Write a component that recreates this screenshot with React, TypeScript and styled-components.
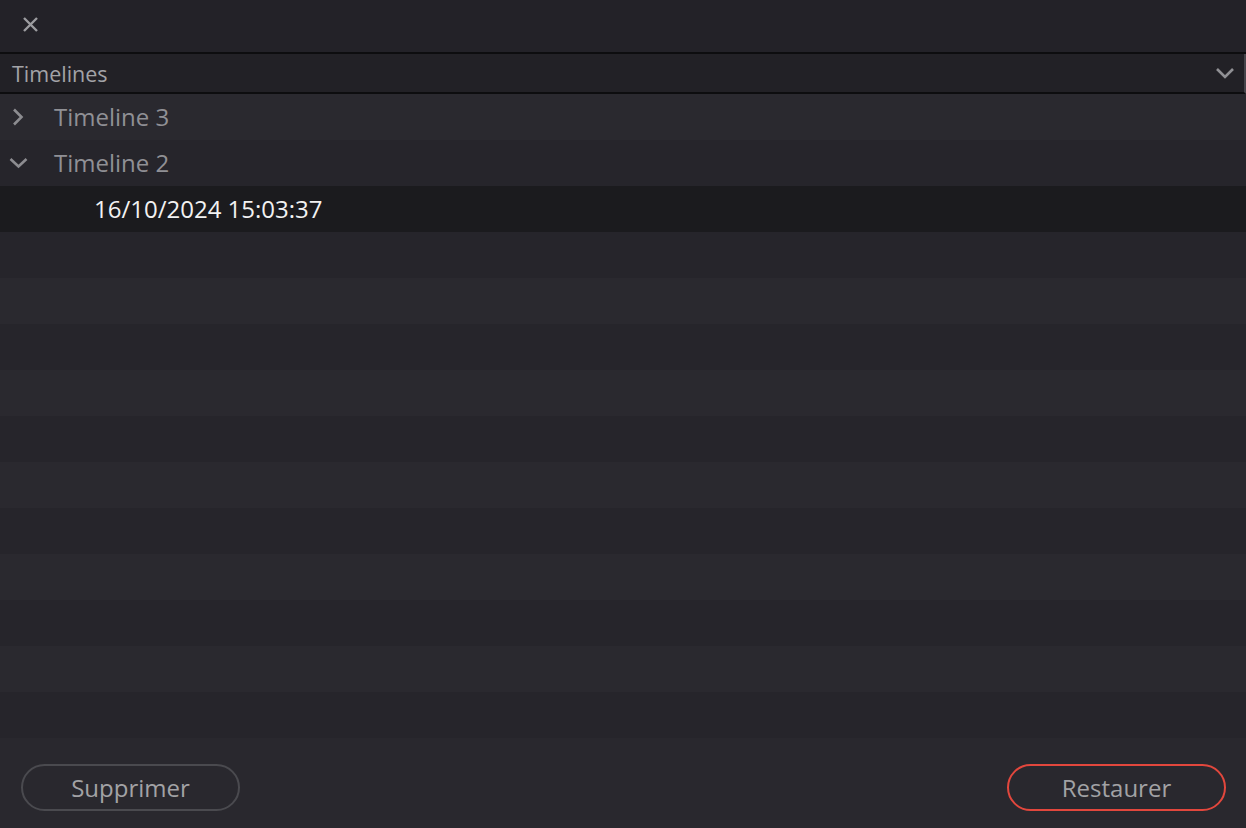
import styled, { createGlobalStyle } from "styled-components";

const GlobalStyle = createGlobalStyle`
  html, body {
    margin: 0;
    padding: 0;
    background: #29282e;
  }
  body {
    font-family: "Open Sans", "Noto Sans", sans-serif;
  }
`;

const Panel = styled.div`
  width: 1246px;
  height: 828px;
  display: flex;
  flex-direction: column;
  background: #29282e;
  overflow: hidden;
`;

const TopBar = styled.div`
  height: 54px;
  display: flex;
  align-items: center;
  padding-left: 21px;
  background: #232228;
  border-bottom: 2px solid #0d0d0f;
  box-sizing: border-box;
  flex-shrink: 0;
`;

const CloseButton = styled.button`
  width: 18px;
  height: 18px;
  padding: 0;
  border: none;
  background: transparent;
  display: flex;
  align-items: center;
  justify-content: center;
  cursor: pointer;
  margin-top: -4px;
`;

const Header = styled.div`
  height: 40px;
  display: flex;
  align-items: center;
  justify-content: space-between;
  padding: 0 9px 0 12px;
  background: #222126;
  border-bottom: 2px solid #0d0d0f;
  border-right: 2px solid #46454b;
  box-sizing: border-box;
  flex-shrink: 0;
  color: #a3a3a7;
  font-size: 21.5px;
`;

const List = styled.div`
  display: flex;
  flex-direction: column;
  flex-shrink: 0;
`;

const Row = styled.div<{ $odd: boolean; $selected?: boolean }>`
  height: 46px;
  display: flex;
  align-items: center;
  background: ${(p) => (p.$selected ? "#1b1b1e" : p.$odd ? "#26252b" : "#2a292f")};
  font-size: 24px;
  line-height: 1;
`;

const Toggle = styled.span`
  width: 54px;
  display: flex;
  align-items: center;
  padding-left: 8px;
  box-sizing: border-box;
`;

const RowLabel = styled.span<{ $indent?: number; $bright?: boolean }>`
  padding-left: ${(p) => p.$indent ?? 0}px;
  color: ${(p) => (p.$bright ? "#f2f2f2" : "#909095")};
  margin-top: -1px;
`;

const Footer = styled.div`
  flex: 1;
  display: flex;
  align-items: center;
  justify-content: space-between;
  padding: 8px 20px 0 21px;
  background: #29282e;
`;

const PillButton = styled.button<{ $accent?: boolean }>`
  width: 219px;
  height: 47px;
  border-radius: 24px;
  border: 2px solid ${(p) => (p.$accent ? "#e2473d" : "#4a4a4f")};
  background: transparent;
  color: #a2a2a5;
  font-family: "Open Sans", "Noto Sans", sans-serif;
  font-size: 24px;
  cursor: pointer;
`;

const Chevron = ({ dir }: { dir: "right" | "down" }) =>
  dir === "right" ? (
    <svg width="20" height="20" viewBox="0 0 20 20">
      <path d="M6 2.5 L13.5 10 L6 17.5" fill="none" stroke="#8c8c90" strokeWidth="2.6" />
    </svg>
  ) : (
    <svg width="20" height="20" viewBox="0 0 20 20">
      <path d="M2.5 6 L10.5 13.5 L18.5 6" fill="none" stroke="#8c8c90" strokeWidth="2.6" />
    </svg>
  );

const rows = [
  { label: "Timeline 3", toggle: "right" as const },
  { label: "Timeline 2", toggle: "down" as const },
  { label: "16/10/2024 15:03:37", child: true },
];

export default function App() {
  const total = 14;
  return (
    <>
      <GlobalStyle />
      <Panel>
        <TopBar>
          <CloseButton aria-label="Fermer">
            <svg width="17" height="17" viewBox="0 0 17 17">
              <path d="M2 2 L15 15 M15 2 L2 15" stroke="#9c9ca0" strokeWidth="2.4" />
            </svg>
          </CloseButton>
        </TopBar>
        <Header>
          <span>Timelines</span>
          <svg width="20" height="12" viewBox="0 0 20 12">
            <path d="M2 2 L10 10 L18 2" fill="none" stroke="#909094" strokeWidth="2.6" />
          </svg>
        </Header>
        <List>
          {Array.from({ length: total }).map((_, i) => {
            const item = rows[i];
            return (
              <Row key={i} $odd={i % 2 === 1} $selected={item?.child}>
                {item && !item.child && (
                  <>
                    <Toggle>
                      <Chevron dir={item.toggle!} />
                    </Toggle>
                    <RowLabel>{item.label}</RowLabel>
                  </>
                )}
                {item?.child && (
                  <RowLabel $indent={94} $bright>
                    {item.label}
                  </RowLabel>
                )}
              </Row>
            );
          })}
        </List>
        <Footer>
          <PillButton>Supprimer</PillButton>
          <PillButton $accent>Restaurer</PillButton>
        </Footer>
      </Panel>
    </>
  );
}
